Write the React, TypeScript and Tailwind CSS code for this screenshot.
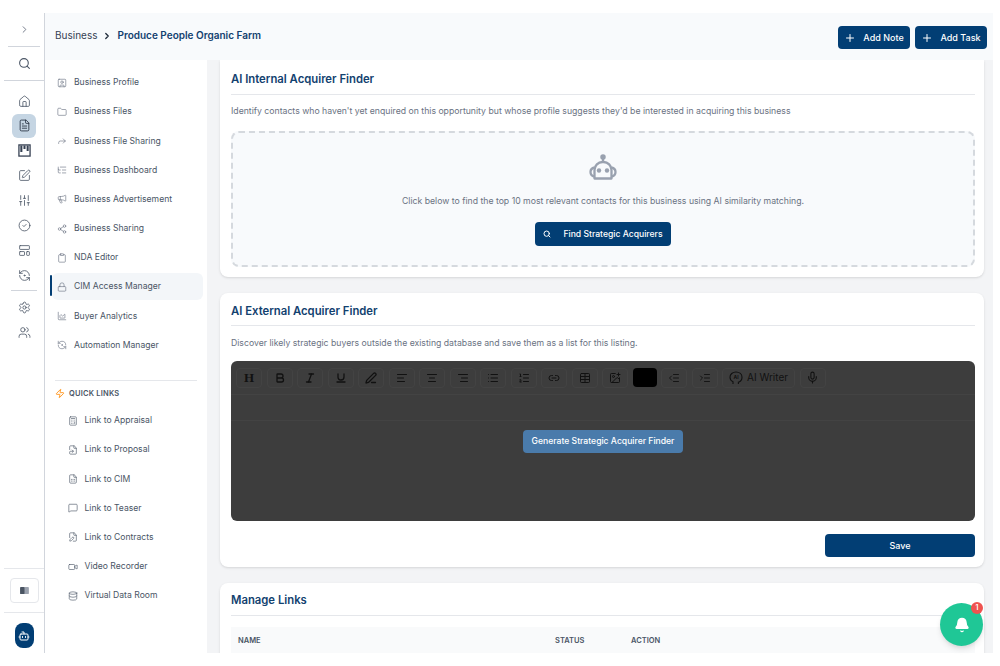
import type { ReactNode } from "react";
import {
  AlignCenter,
  AlignLeft,
  AlignRight,
  AreaChart,
  Bell,
  Bold,
  Bot,
  Calculator,
  CheckCircle2,
  ChevronRight,
  Clipboard,
  Database,
  FileEdit,
  FileSpreadsheet,
  FileSymlink,
  FileText,
  Folder,
  Forward,
  Home,
  ImagePlus,
  IndentDecrease,
  IndentIncrease,
  Italic,
  LayoutTemplate,
  Link2,
  List,
  ListOrdered,
  ListTree,
  Lock,
  Megaphone,
  MessageSquare,
  Mic,
  PenLine,
  Plus,
  RefreshCcwDot,
  Search,
  Settings,
  Share2,
  SlidersVertical,
  SquarePen,
  SquareUser,
  Table,
  Underline,
  Users,
  Video,
  Zap,
} from "lucide-react";

const businessLinks = [
  { name: "Business Profile", icon: SquareUser },
  { name: "Business Files", icon: Folder },
  { name: "Business File Sharing", icon: Forward },
  { name: "Business Dashboard", icon: ListTree },
  { name: "Business Advertisement", icon: Megaphone },
  { name: "Business Sharing", icon: Share2 },
  { name: "NDA Editor", icon: Clipboard },
  { name: "CIM Access Manager", icon: Lock, active: true },
  { name: "Buyer Analytics", icon: AreaChart },
  { name: "Automation Manager", icon: RefreshCcwDot },
];

const quickLinks = [
  { name: "Link to Appraisal", icon: Calculator },
  { name: "Link to Proposal", icon: FileSymlink },
  { name: "Link to CIM", icon: FileSpreadsheet },
  { name: "Link to Teaser", icon: MessageSquare },
  { name: "Link to Contracts", icon: FileEdit },
  { name: "Video Recorder", icon: Video },
  { name: "Virtual Data Room", icon: Database },
];

const railTop = [Home, FileText, null, SquarePen, SlidersVertical, CheckCircle2, LayoutTemplate, RefreshCcwDot];

const toolbarIcons = [
  Bold,
  Italic,
  Underline,
  PenLine,
  AlignLeft,
  AlignCenter,
  AlignRight,
  List,
  ListOrdered,
  Link2,
  Table,
  ImagePlus,
];

function KanbanMark() {
  return (
    <svg viewBox="0 0 14 14" className="h-[13px] w-[13px] text-gray-700" fill="none" stroke="currentColor">
      <rect x="1" y="1" width="12" height="12" strokeWidth="1.4" />
      <path d="M3.6 1.5v7M7 1.5v4M10.4 1.5v6" strokeWidth="2.2" />
    </svg>
  );
}

function PanelMark() {
  return (
    <svg viewBox="0 0 10 8" className="h-[7px] w-[9px]">
      <rect width="10" height="8" rx="1" fill="#9ca3af" />
      <rect width="5" height="8" rx="1" fill="#4b5563" />
    </svg>
  );
}

function RobotMark() {
  return (
    <svg viewBox="0 0 28 26" className="h-[26px] w-[28px] text-gray-400" fill="none" stroke="currentColor" strokeWidth="2.3">
      <circle cx="14" cy="3" r="1.6" fill="currentColor" />
      <path d="M14 4.5V8" />
      <path d="M5.5 24.5V16a8 8 0 0 1 8-8h1a8 8 0 0 1 8 8v8.5z" strokeLinejoin="round" />
      <path d="M5.5 13.5C3 14 1.5 15.5 1.5 18s1.5 4 4 4.5M22.5 13.5c2.5.5 4 2 4 4.5s-1.5 4-4 4.5" />
      <circle cx="10" cy="16.5" r="2.2" fill="currentColor" stroke="none" />
      <circle cx="18" cy="16.5" r="2.2" fill="currentColor" stroke="none" />
    </svg>
  );
}

function AiHead() {
  return (
    <svg viewBox="0 0 14 14" className="h-[14px] w-[14px]" fill="none" stroke="currentColor" strokeWidth="1.1">
      <path d="M4 13v-2.2C2.2 9.8 1 8.2 1 6.2 1 3.2 3.6 1 7 1s6 2.2 6 5.2c0 2.5-1.6 4.3-3.6 5V13" />
      <text x="7" y="8" textAnchor="middle" fontSize="5" fontWeight="700" fill="currentColor" stroke="none">
        AI
      </text>
    </svg>
  );
}

function Rail() {
  return (
    <aside className="flex w-[45px] shrink-0 flex-col items-center border-r border-gray-300 bg-white pl-[4px]">
      <div className="flex h-[34px] w-[32px] items-center justify-center border-b border-gray-300">
        <ChevronRight className="h-[11px] w-[11px] text-gray-500" />
      </div>
      <div className="flex h-[34px] w-full items-center justify-center border-b border-gray-300">
        <Search className="h-[13px] w-[13px] text-gray-600" />
      </div>
      <div className="mt-[8px] flex flex-col items-center gap-[0.9px]">
        {railTop.map((Icon, i) => (
          <div
            key={i}
            className={`flex h-[24px] w-[24px] items-center justify-center rounded-md ${i === 1 ? "bg-[#c5d5e3]" : ""}`}
          >
            {Icon ? (
              <Icon className={`h-[13px] w-[13px] ${i === 1 ? "text-gray-800" : "text-gray-600"}`} strokeWidth={1.5} />
            ) : (
              <KanbanMark />
            )}
          </div>
        ))}
      </div>
      <div className="mt-[3px] mb-[4px] h-px w-[26px] bg-gray-300" />
      <div className="flex flex-col items-center gap-[1px]">
        <div className="flex h-[24px] w-[24px] items-center justify-center">
          <Settings className="h-[13px] w-[13px] text-gray-600" strokeWidth={1.5} />
        </div>
        <div className="flex h-[24px] w-[24px] items-center justify-center">
          <Users className="h-[13px] w-[13px] text-gray-600" strokeWidth={1.5} />
        </div>
      </div>
      <div className="mt-auto flex h-[45px] w-full items-center justify-center border-y border-gray-200">
        <div className="flex h-[25px] w-[29px] items-center justify-center rounded border border-gray-200 bg-white">
          <PanelMark />
        </div>
      </div>
      <div className="flex h-[40px] items-center justify-center pt-[5px]">
        <div className="flex h-[25px] w-[19px] items-center justify-center rounded-lg bg-[#023e74]">
          <Bot className="h-[12px] w-[12px] text-white" />
        </div>
      </div>
    </aside>
  );
}

function SideLink({ name, icon: Icon, active }: { name: string; icon: typeof Home; active?: boolean }) {
  return (
    <div className="relative flex h-[29.2px] items-center">
      {active && <div className="absolute top-[3px] left-[5px] h-[21px] w-[2px] rounded bg-[#023e74]" />}
      <div className={`ml-[7px] flex h-[27px] w-[151px] items-center rounded-md pl-[5px] ${active ? "bg-[#f3f6f9]" : ""}`}>
        <Icon className="h-[10px] w-[10px] shrink-0 text-gray-500" strokeWidth={1.5} />
        <span className="ml-[7px] text-[8.6px] text-gray-600">{name}</span>
      </div>
    </div>
  );
}

function SideBar() {
  return (
    <nav className="w-[162px] shrink-0 bg-white pt-[8px]">
      {businessLinks.map((l) => (
        <SideLink key={l.name} {...l} />
      ))}
      <div className="mx-[10px] mt-[20px] h-px bg-gray-200" />
      <div className="mt-[7px] flex items-center pl-[10px]">
        <Zap className="h-[11px] w-[10px] text-orange-400" />
        <span className="ml-[4px] text-[7.5px] font-semibold tracking-[0.2px] text-gray-600">QUICK LINKS</span>
      </div>
      <div className="mt-[7px] flex flex-col">
        {quickLinks.map((l) => (
          <div key={l.name} className="flex h-[29.2px] items-center pl-[23px]">
            <l.icon className="h-[10px] w-[10px] shrink-0 text-gray-600" strokeWidth={1.5} />
            <span className="ml-[6.5px] text-[8.6px] text-gray-600">{l.name}</span>
          </div>
        ))}
      </div>
    </nav>
  );
}

function ToolBtn({ children, wide }: { children: ReactNode; wide?: boolean }) {
  return (
    <div
      className={`flex h-[20px] items-center justify-center rounded-sm border border-[#434343] text-[#111111] ${wide ? "w-[73px] gap-[4px]" : "w-[26px]"}`}
    >
      {children}
    </div>
  );
}

function Editor() {
  return (
    <div className="mt-[12px] h-[160px] overflow-hidden rounded-md bg-[#3d3d3d]">
      <div className="flex h-[34px] items-center gap-[4.5px] border-b border-[#434343] pl-[5px]">
        <ToolBtn>
          <span className="font-['Liberation_Serif',serif] text-[13px] font-bold">H</span>
        </ToolBtn>
        {toolbarIcons.map((Icon, i) => (
          <ToolBtn key={i}>
            <Icon className="h-[12px] w-[12px]" strokeWidth={i < 4 ? 2.6 : 2} />
          </ToolBtn>
        ))}
        <div className="h-[19px] w-[24px] rounded-sm bg-black" />
        <ToolBtn>
          <IndentDecrease className="h-[12px] w-[12px]" strokeWidth={1.8} />
        </ToolBtn>
        <ToolBtn>
          <IndentIncrease className="h-[12px] w-[12px]" strokeWidth={1.8} />
        </ToolBtn>
        <ToolBtn wide>
          <AiHead />
          <span className="text-[10px]">AI Writer</span>
        </ToolBtn>
        <ToolBtn>
          <Mic className="h-[13px] w-[13px]" strokeWidth={2} />
        </ToolBtn>
      </div>
      <div className="h-[26px] border-b border-[#434343]" />
      <div className="flex justify-center pt-[9px]">
        <button className="flex h-[23px] w-[160px] items-center justify-center rounded bg-[#4a7bab] text-[8.6px] font-medium text-white">
          Generate Strategic Acquirer Finder
        </button>
      </div>
    </div>
  );
}

function CardTitle({ children, className }: { children: ReactNode; className: string }) {
  return (
    <h2 className={`border-b border-gray-200 text-[11.3px] leading-[16px] font-semibold text-[#12416f] ${className}`}>
      {children}
    </h2>
  );
}

export default function App() {
  return (
    <div className="h-[666px] w-[1000px] overflow-hidden bg-white pt-[13px] pr-[7px] pb-[13px] font-['Inter',sans-serif]">
      <div className="relative flex h-[640px] bg-white">
        <Rail />
        <div className="flex min-w-0 flex-1 flex-col">
          <header className="flex h-[47px] shrink-0 items-center justify-between bg-[#f8fafc] pr-[6px] pl-[10px]">
            <div className="flex items-center pb-[2px] text-[10px] text-gray-700">
              <span>Business</span>
              <ChevronRight className="mx-[5px] h-[10px] w-[10px] text-gray-800" strokeWidth={3} />
              <span className="font-semibold text-[#12416f]">Produce People Organic Farm</span>
            </div>
            <div className="mt-[2px] flex gap-[5px]">
              {["Add Note", "Add Task"].map((t) => (
                <button
                  key={t}
                  className="flex h-[23px] w-[72px] items-center justify-center gap-[7px] rounded bg-[#023e74] text-[9px] font-medium text-white"
                >
                  <Plus className="h-[12px] w-[12px]" />
                  {t}
                </button>
              ))}
            </div>
          </header>
          <div className="flex min-h-0 flex-1">
            <SideBar />
            <main className="flex min-w-0 flex-1 flex-col gap-[16px] overflow-hidden bg-[#f3f4f6] pr-[9px] pl-[13px]">
              <section className="h-[217px] shrink-0 rounded-b-lg bg-white pt-[11px] pr-[9px] pl-[11px] shadow-sm">
                <CardTitle className="pb-[7px]">AI Internal Acquirer Finder</CardTitle>
                <p className="mt-[10px] text-[8.7px] leading-[12px] text-gray-500">
                  Identify contacts who haven't yet enquired on this opportunity but whose profile suggests they'd be
                  interested in acquiring this business
                </p>
                <div className="mt-[14px] flex h-[136px] flex-col items-center rounded-lg border-2 border-dashed border-[#d5d9de] bg-[#f8fafc] pt-[21px]">
                  <RobotMark />
                  <p className="mt-[15px] text-[8.7px] leading-[12px] text-gray-500">
                    Click below to find the top 10 most relevant contacts for this business using AI similarity matching.
                  </p>
                  <button className="mt-[15px] flex h-[24px] w-[136px] items-center justify-center gap-[12px] rounded bg-[#023e74] text-[8.6px] font-medium text-white">
                    <Search className="h-[8px] w-[8px]" strokeWidth={3} />
                    Find Strategic Acquirers
                  </button>
                </div>
              </section>

              <section className="h-[274px] shrink-0 rounded-lg bg-white pt-[10px] pr-[9px] pl-[11px] shadow-sm">
                <CardTitle className="pb-[6px]">AI External Acquirer Finder</CardTitle>
                <p className="mt-[11px] text-[8.7px] leading-[12px] text-gray-500">
                  Discover likely strategic buyers outside the existing database and save them as a list for this listing.
                </p>
                <Editor />
                <div className="mt-[13px] flex justify-end">
                  <button className="h-[23px] w-[150px] rounded bg-[#023e74] text-[9px] font-medium text-white">
                    Save
                  </button>
                </div>
              </section>

              <section className="h-[100px] shrink-0 rounded-t-lg bg-white pt-[9px] pr-[9px] pl-[11px] shadow-sm">
                <CardTitle className="pb-[7px]">Manage Links</CardTitle>
                <div className="mt-[11px] flex h-[40px] bg-[#f9fafb] pt-[8px] pl-[7px] text-[7.5px] font-semibold text-gray-600">
                  <span className="w-[317px]">NAME</span>
                  <span className="w-[76px]">STATUS</span>
                  <span>ACTION</span>
                </div>
              </section>
            </main>
          </div>
        </div>
        <div className="absolute right-[10px] bottom-[7px] flex h-[43px] w-[43px] items-center justify-center rounded-full bg-[#1fc796] shadow-md">
          <Bell className="h-[16px] w-[16px] fill-white text-white" />
          <span className="absolute -top-[1px] right-[0px] flex h-[12px] w-[12px] items-center justify-center rounded-full bg-[#ef5350] text-[7px] font-semibold text-white">
            1
          </span>
        </div>
      </div>
    </div>
  );
}
